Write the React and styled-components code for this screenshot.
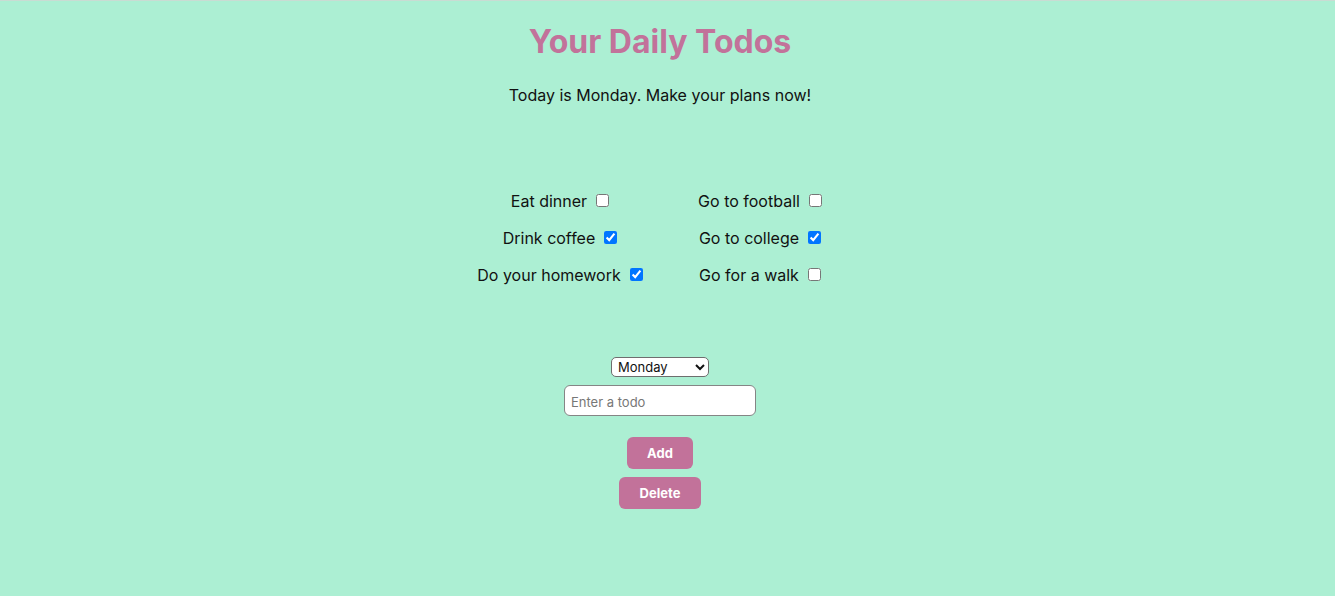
import React from "react";
import styled, { createGlobalStyle } from "styled-components";

const GlobalStyle = createGlobalStyle`
  html, body {
    margin: 0;
    padding: 0;
    background: #acefd3;
    font-family: Inter, "Noto Sans", sans-serif;
    color: #111;
  }
  body {
    border-top: 1px solid #c9dcd3;
  }
`;

const Page = styled.main`
  width: 1320px;
  min-height: 595px;
  display: flex;
  flex-direction: column;
  align-items: center;
  box-sizing: border-box;
  padding-top: 22px;
`;

const Title = styled.h1`
  margin: 0;
  font-size: 32px;
  line-height: 38px;
  font-weight: 700;
  color: #c2729a;
`;

const Subtitle = styled.p`
  margin: 24px 0 0;
  font-size: 16px;
  line-height: 20px;
`;

const TodoGrid = styled.div`
  margin-top: 77px;
  display: grid;
  grid-template-columns: 200px 200px;
`;

const Column = styled.div`
  display: flex;
  flex-direction: column;
`;

const TodoRow = styled.label`
  height: 37px;
  display: flex;
  align-items: center;
  justify-content: center;
  gap: 9px;
  font-size: 16px;
`;

const Check = styled.input`
  width: 13px;
  height: 13px;
  margin: 0;
`;

const Form = styled.div`
  margin-top: 64px;
  display: flex;
  flex-direction: column;
  align-items: center;
`;

const DaySelect = styled.select`
  width: 98px;
  height: 20px;
  box-sizing: border-box;
  border: 1px solid #6e6e6e;
  border-radius: 5px;
  background: #fff;
  font-family: Inter, "Noto Sans", sans-serif;
  font-size: 13px;
  color: #111;
  padding: 0 2px;
`;

const TodoInput = styled.input`
  margin-top: 8px;
  width: 192px;
  height: 31px;
  box-sizing: border-box;
  border: 1px solid #858585;
  border-radius: 6px;
  padding: 2px 6px 0;
  font-family: Inter, "Noto Sans", sans-serif;
  font-size: 13px;
  background: #fff;
  &::placeholder {
    color: #777;
  }
`;

const Button = styled.button`
  margin-top: ${(p) => p.$top}px;
  height: 32px;
  padding: 0 ${(p) => p.$pad}px;
  border: none;
  border-radius: 6px;
  background: #c2729a;
  color: #fff;
  font-family: Inter, "Noto Sans", sans-serif;
  font-size: 13px;
  font-weight: 700;
  cursor: pointer;
`;

const left = [
  { text: "Eat dinner", done: false },
  { text: "Drink coffee", done: true },
  { text: "Do your homework", done: true },
];
const right = [
  { text: "Go to football", done: false },
  { text: "Go to college", done: true },
  { text: "Go for a walk", done: false },
];

function TodoColumn({ items }) {
  return (
    <Column>
      {items.map((t) => (
        <TodoRow key={t.text}>
          <span>{t.text}</span>
          <Check type="checkbox" defaultChecked={t.done} />
        </TodoRow>
      ))}
    </Column>
  );
}

export default function App() {
  return (
    <>
      <GlobalStyle />
      <Page>
        <Title>Your Daily Todos</Title>
        <Subtitle>Today is Monday. Make your plans now!</Subtitle>
        <TodoGrid>
          <TodoColumn items={left} />
          <TodoColumn items={right} />
        </TodoGrid>
        <Form>
          <DaySelect defaultValue="Monday">
            {["Monday", "Tuesday", "Wednesday", "Thursday", "Friday", "Saturday", "Sunday"].map((d) => (
              <option key={d}>{d}</option>
            ))}
          </DaySelect>
          <TodoInput placeholder="Enter a todo" />
          <Button $top={21} $pad={20}>Add</Button>
          <Button $top={8} $pad={21}>Delete</Button>
        </Form>
      </Page>
    </>
  );
}
